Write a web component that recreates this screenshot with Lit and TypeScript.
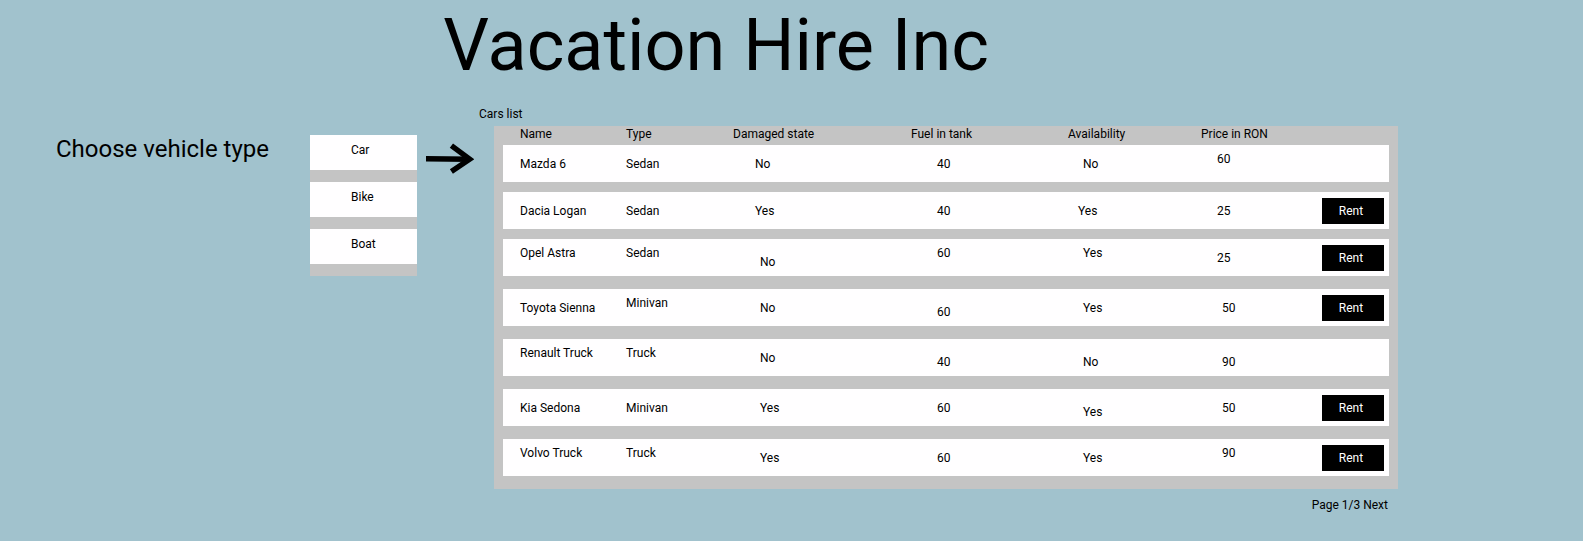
import { LitElement, html, css, nothing } from "lit";
import { customElement, property, state } from "lit/decorators.js";
import { classMap } from "lit/directives/class-map.js";

type Place = "" | "top" | "bottom" | "near" | "top near" | "bottom near";
type Cell = [text: string, place?: Place];

interface Vehicle {
  cells: Cell[];
  rentable: boolean;
  tight?: boolean;
}

const COLUMNS = [
  { key: "name", label: "Name" },
  { key: "type", label: "Type" },
  { key: "damaged", label: "Damaged state" },
  { key: "fuel", label: "Fuel in tank" },
  { key: "availability", label: "Availability" },
  { key: "price", label: "Price in RON" },
];

const CARS: Vehicle[] = [
  { cells: [["Mazda 6"], ["Sedan"], ["No", "near"], ["40"], ["No"], ["60", "top near"]], rentable: false, tight: true },
  { cells: [["Dacia Logan"], ["Sedan"], ["Yes", "near"], ["40"], ["Yes", "near"], ["25", "near"]], rentable: true, tight: true },
  { cells: [["Opel Astra", "top"], ["Sedan", "top"], ["No", "bottom"], ["60", "top"], ["Yes", "top"], ["25", "near"]], rentable: true },
  { cells: [["Toyota Sienna"], ["Minivan", "top"], ["No"], ["60", "bottom"], ["Yes"], ["50"]], rentable: true },
  { cells: [["Renault Truck", "top"], ["Truck", "top"], ["No"], ["40", "bottom"], ["No", "bottom"], ["90", "bottom"]], rentable: false },
  { cells: [["Kia Sedona"], ["Minivan"], ["Yes"], ["60"], ["Yes", "bottom"], ["50"]], rentable: true },
  { cells: [["Volvo Truck", "top"], ["Truck", "top"], ["Yes"], ["60"], ["Yes"], ["90", "top"]], rentable: true },
];

@customElement("vehicle-types")
export class VehicleTypes extends LitElement {
  @state() private selected = "Car";

  static styles = css`
    :host {
      display: block;
    }
    .list {
      display: flex;
      flex-direction: column;
      gap: 12px;
      padding-bottom: 12px;
      background: #c4c4c4;
    }
    .option {
      height: 35px;
      padding: 0 0 6px 41px;
      border: 0;
      background: #fffeff;
      color: #000;
      font: 12px/16px Roboto, sans-serif;
      text-align: left;
      cursor: pointer;
    }
  `;

  render() {
    return html`
      <div class="list" role="group" aria-label="Vehicle type">
        ${["Car", "Bike", "Boat"].map(
          (type) => html`<button
            class="option"
            type="button"
            aria-pressed=${this.selected === type ? "true" : "false"}
            @click=${() => (this.selected = type)}
          >${type}</button>`
        )}
      </div>
    `;
  }
}

@customElement("vehicle-table")
export class VehicleTable extends LitElement {
  @property({ attribute: false }) vehicles: Vehicle[] = [];

  static styles = css`
    :host {
      display: block;
    }
    .table {
      display: flow-root;
      padding: 0 9px;
      background: #c4c4c4;
      font: 12px/16px Roboto, sans-serif;
    }
    .head,
    .body {
      display: block;
    }
    .row {
      display: grid;
      grid-template-columns: 123fr 107fr 178fr 157fr 133fr 121fr 67px;
    }
    .labels {
      min-height: 19px;
    }
    .vehicle {
      min-height: 37px;
      margin-bottom: 13px;
      align-items: center;
      background: #fffeff;
    }
    .tight {
      margin-bottom: 10px;
    }
    .label {
      padding: 0;
      font-weight: 400;
      text-align: left;
      white-space: nowrap;
    }
    .cell {
      padding: 6px 0 6px var(--indent, 0);
      white-space: nowrap;
    }
    .label.name {
      padding-left: 17px;
    }
    .cell.name {
      --indent: 17px;
    }
    .cell.damaged {
      --indent: 27px;
    }
    .cell.fuel {
      --indent: 26px;
    }
    .cell.availability {
      --indent: 15px;
    }
    .cell.price {
      --indent: 21px;
    }
    .cell.near {
      padding-left: calc(var(--indent) - 5px);
    }
    .cell.top {
      align-self: start;
    }
    .cell.bottom {
      align-self: end;
    }
    .action {
      padding: 0 5px 0 0;
    }
    .rent {
      display: block;
      width: 100%;
      height: 26px;
      padding: 0 4px 0 0;
      border: 0;
      background: #000;
      color: #fff;
      font: inherit;
      cursor: pointer;
    }
  `;

  render() {
    return html`
      <table class="table" aria-label="Cars list">
        <thead class="head">
          <tr class="row labels">
            ${COLUMNS.map((c) => html`<th scope="col" class="label ${c.key}">${c.label}</th>`)}
            <td class="action"></td>
          </tr>
        </thead>
        <tbody class="body">
          ${this.vehicles.map(
            (v) => html`
              <tr class=${classMap({ row: true, vehicle: true, tight: !!v.tight })}>
                ${v.cells.map(([text, place = ""], i) => html`<td class="cell ${COLUMNS[i].key} ${place}">${text}</td>`)}
                <td class="action">
                  ${v.rentable ? html`<button class="rent" type="button">Rent</button>` : nothing}
                </td>
              </tr>
            `
          )}
        </tbody>
      </table>
    `;
  }
}

@customElement("app-root")
export class AppRoot extends LitElement {
  static styles = css`
    :host {
      display: block;
      box-sizing: border-box;
      min-height: 100vh;
      background: #a1c2cd;
      color: #000;
      font: 12px/16px Roboto, sans-serif;
    }
    .title {
      margin: 0;
      padding-left: 28%;
      font-size: 72px;
      line-height: 92px;
      font-weight: 400;
      white-space: nowrap;
    }
    .main {
      display: grid;
      grid-template-columns: 254fr 107fr 62fr 919fr;
      align-items: start;
      padding: 14px 185px 24px 56px;
    }
    .prompt {
      margin: 0;
      padding-top: 29px;
      font-size: 24px;
      line-height: 28px;
      font-weight: 400;
      white-space: nowrap;
    }
    .types {
      margin-top: 29px;
    }
    .arrow {
      display: block;
      width: 48px;
      height: 32px;
      margin: 37px 0 0 9px;
      fill: none;
      stroke: #000;
      stroke-width: 5.4;
    }
    .caption {
      margin: 0 0 4px;
      font-size: 12px;
      line-height: 16px;
      font-weight: 400;
    }
    .cars {
      margin-left: 15px;
    }
    .pager {
      margin-top: 8px;
      padding-right: 10px;
      text-align: right;
    }
    .next {
      color: inherit;
      text-decoration: none;
    }
  `;

  render() {
    return html`
      <header><h1 class="title">Vacation Hire Inc</h1></header>
      <main class="main">
        <h2 class="prompt">Choose vehicle type</h2>
        <vehicle-types class="types"></vehicle-types>
        <svg class="arrow" viewBox="0 0 48 32" aria-hidden="true">
          <path d="M0 15.7L44 16.2" />
          <path d="M25.4 2.6L43.6 16.2L25.4 28.6" />
        </svg>
        <section>
          <h2 class="caption">Cars list</h2>
          <vehicle-table class="cars" .vehicles=${CARS}></vehicle-table>
          <nav class="pager" aria-label="Pages">Page 1/3 <a class="next" href="#next">Next</a></nav>
        </section>
      </main>
    `;
  }
}
